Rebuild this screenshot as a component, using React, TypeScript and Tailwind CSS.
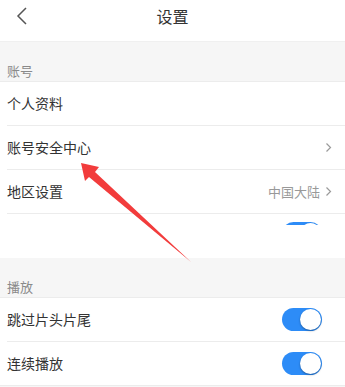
import React from "react";

const font = { fontFamily: '"Noto Sans CJK SC", "Noto Sans", sans-serif' };

function Chevron() {
  return (
    <svg width="7" height="11" viewBox="0 0 7 11" className="ml-[5px]">
      <path d="M1.5 1.5 L5.5 5.5 L1.5 9.5" fill="none" stroke="#9a9a9a" strokeWidth="1.2" />
    </svg>
  );
}

function Toggle() {
  return (
    <div className="relative h-[23px] w-[40px] rounded-full bg-[#2d8cf7]">
      <div className="absolute right-[1px] top-[1px] h-[21px] w-[21px] rounded-full bg-white shadow-[0_1px_2px_rgba(0,0,0,0.35)]" />
    </div>
  );
}

function Row({ label, right, divider = true }: { label: string; right?: React.ReactNode; divider?: boolean }) {
  return (
    <div className="bg-white pl-[7px]">
      <div className={`flex h-[44px] items-center pr-[13px] ${divider ? "border-b border-[#ececec]" : ""}`}>
        <span className="flex-1 text-[14px] text-[#333]">{label}</span>
        {right}
      </div>
    </div>
  );
}

function Section({ title }: { title: string }) {
  return (
    <div className="flex h-[40px] items-end border-b border-[#ececec] bg-[#f6f6f6] pb-[1px] pl-[7px]">
      <span className="text-[13px] leading-[18px] text-[#8a8a8a]">{title}</span>
    </div>
  );
}

export default function App() {
  return (
    <div className="relative h-[387px] w-[345px] overflow-hidden bg-white" style={font}>
      {/* header */}
      <div className="relative flex h-[42px] justify-center border-b border-[#f0f0f0] bg-white pt-[4px]">
        <svg width="14" height="18" viewBox="0 0 14 18" className="absolute left-[15px] top-[7px]">
          <path d="M11 1 L3 9 L11 17" fill="none" stroke="#555" strokeWidth="1.5" />
        </svg>
        <span className="text-[16px] leading-[24px] text-[#333]">设置</span>
      </div>

      <Section title="账号" />
      <Row label="个人资料" />
      <Row label="账号安全中心" right={<Chevron />} />
      <Row
        label="地区设置"
        right={
          <div className="flex items-center">
            <span className="text-[13px] text-[#999]">中国大陆</span>
            <Chevron />
          </div>
        }
      />
      <div className="h-[44px] bg-white pl-[7px]">
        <div className="flex justify-end pr-[23px] pt-[8px]">
          <div className="h-[3px] overflow-hidden">
            <Toggle />
          </div>
        </div>
      </div>

      <Section title="播放" />
      <div className="bg-white pl-[7px]">
        <div className="flex h-[44px] items-center border-b border-[#ececec] pr-[23px]">
          <span className="flex-1 text-[14px] text-[#333]">跳过片头片尾</span>
          <Toggle />
        </div>
      </div>
      <div className="flex h-[44px] items-center border-b border-[#ececec] bg-white pl-[7px] pr-[23px]">
        <span className="flex-1 text-[14px] text-[#333]">连续播放</span>
        <Toggle />
      </div>
      <div className="h-[10px] bg-[#f6f6f6]" />

      {/* annotation arrow */}
      <svg width="345" height="387" className="pointer-events-none absolute left-0 top-0">
        <polygon points="81,163 99,167 95,172 191,262 89,177 85,181" fill="#f23c3c" />
      </svg>
    </div>
  );
}
